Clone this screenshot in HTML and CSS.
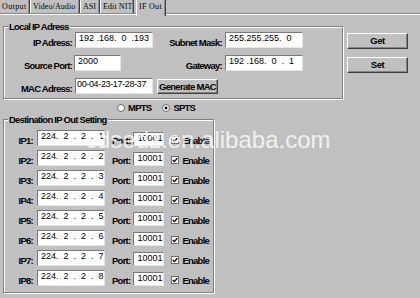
FILE: index.html
```html
<!DOCTYPE html>
<html>
<head>
<meta charset="utf-8">
<title>IP Out</title>
<link rel="stylesheet" href="styles.css">
</head>
<body>
<div class="app">
  <div class="tabs">
    <div class="tab w-output">Output</div>
    <div class="tab w-video">Video/Audio</div>
    <div class="tab w-asi">ASI</div>
    <div class="tab w-nit">Edit NIT</div>
    <div class="tab tab-active w-if">IF Out</div>
  </div>
  <div class="panel">
    <div class="top">
      <div class="group local">
        <span class="group-title">Local IP Adress</span>
        <div class="local-grid">
          <span class="lab">IP Adress:</span>
          <div class="field f-wide">192 .168.  0  .193</div>
          <span class="lab">Subnet Mask:</span>
          <div class="field f-wide">255.255.255.  0</div>

          <span class="lab">Source Port:</span>
          <div class="field f-port">2000</div>
          <span class="lab">Gateway:</span>
          <div class="field f-wide">192 .168.  0  .  1</div>

          <span class="lab">MAC Adress:</span>
          <div class="field f-wide f-mac">00-04-23-17-28-37</div>
          <div class="btn btn-gen">Generate MAC</div>
          <span></span>
        </div>
      </div>
      <div class="btns">
        <div class="btn btn-side">Get</div>
        <div class="btn btn-side">Set</div>
      </div>
    </div>

    <div class="radios">
      <svg class="radio" width="8" height="8" viewBox="0 0 8 8"><circle cx="4" cy="4" r="3.5" fill="#fff" stroke="#6a6a6a"/></svg>
      <span class="opt">MPTS</span>
      <svg class="radio radio-2" width="8" height="8" viewBox="0 0 8 8"><circle cx="4" cy="4" r="3.5" fill="#fff" stroke="#6a6a6a"/><circle cx="4" cy="4" r="1.4" fill="#000"/></svg>
      <span class="opt">SPTS</span>
    </div>

    <div class="group dest">
      <span class="group-title">Destination IP Out Setting</span>
      <div class="rows">
        <div class="row"><span class="ip-lab">IP1:</span><div class="field f-ip">224.  2  .  2  .  1</div><span class="port-lab">Port:</span><div class="field f-pt">10001</div><svg class="chk" width="8" height="8" viewBox="0 0 8 8"><rect x=".5" y=".5" width="7" height="7" fill="#fff" stroke="#707070"/><path d="M1.8 3.8 L3.3 5.6 L6.3 2.2" fill="none" stroke="#000" stroke-width="1.3"/></svg><span class="en">Enable</span></div>
        <div class="row"><span class="ip-lab">IP2:</span><div class="field f-ip">224.  2  .  2  .  2</div><span class="port-lab">Port:</span><div class="field f-pt">10001</div><svg class="chk" width="8" height="8" viewBox="0 0 8 8"><rect x=".5" y=".5" width="7" height="7" fill="#fff" stroke="#707070"/><path d="M1.8 3.8 L3.3 5.6 L6.3 2.2" fill="none" stroke="#000" stroke-width="1.3"/></svg><span class="en">Enable</span></div>
        <div class="row"><span class="ip-lab">IP3:</span><div class="field f-ip">224.  2  .  2  .  3</div><span class="port-lab">Port:</span><div class="field f-pt">10001</div><svg class="chk" width="8" height="8" viewBox="0 0 8 8"><rect x=".5" y=".5" width="7" height="7" fill="#fff" stroke="#707070"/><path d="M1.8 3.8 L3.3 5.6 L6.3 2.2" fill="none" stroke="#000" stroke-width="1.3"/></svg><span class="en">Enable</span></div>
        <div class="row"><span class="ip-lab">IP4:</span><div class="field f-ip">224.  2  .  2  .  4</div><span class="port-lab">Port:</span><div class="field f-pt">10001</div><svg class="chk" width="8" height="8" viewBox="0 0 8 8"><rect x=".5" y=".5" width="7" height="7" fill="#fff" stroke="#707070"/><path d="M1.8 3.8 L3.3 5.6 L6.3 2.2" fill="none" stroke="#000" stroke-width="1.3"/></svg><span class="en">Enable</span></div>
        <div class="row"><span class="ip-lab">IP5:</span><div class="field f-ip">224.  2  .  2  .  5</div><span class="port-lab">Port:</span><div class="field f-pt">10001</div><svg class="chk" width="8" height="8" viewBox="0 0 8 8"><rect x=".5" y=".5" width="7" height="7" fill="#fff" stroke="#707070"/><path d="M1.8 3.8 L3.3 5.6 L6.3 2.2" fill="none" stroke="#000" stroke-width="1.3"/></svg><span class="en">Enable</span></div>
        <div class="row"><span class="ip-lab">IP6:</span><div class="field f-ip">224.  2  .  2  .  6</div><span class="port-lab">Port:</span><div class="field f-pt">10001</div><svg class="chk" width="8" height="8" viewBox="0 0 8 8"><rect x=".5" y=".5" width="7" height="7" fill="#fff" stroke="#707070"/><path d="M1.8 3.8 L3.3 5.6 L6.3 2.2" fill="none" stroke="#000" stroke-width="1.3"/></svg><span class="en">Enable</span></div>
        <div class="row"><span class="ip-lab">IP7:</span><div class="field f-ip">224.  2  .  2  .  7</div><span class="port-lab">Port:</span><div class="field f-pt">10001</div><svg class="chk" width="8" height="8" viewBox="0 0 8 8"><rect x=".5" y=".5" width="7" height="7" fill="#fff" stroke="#707070"/><path d="M1.8 3.8 L3.3 5.6 L6.3 2.2" fill="none" stroke="#000" stroke-width="1.3"/></svg><span class="en">Enable</span></div>
        <div class="row"><span class="ip-lab">IP8:</span><div class="field f-ip">224.  2  .  2  .  8</div><span class="port-lab">Port:</span><div class="field f-pt">10001</div><svg class="chk" width="8" height="8" viewBox="0 0 8 8"><rect x=".5" y=".5" width="7" height="7" fill="#fff" stroke="#707070"/><path d="M1.8 3.8 L3.3 5.6 L6.3 2.2" fill="none" stroke="#000" stroke-width="1.3"/></svg><span class="en">Enable</span></div>
      </div>
    </div>
  </div>
  <div class="watermark">cdsedz.en.alibaba.com</div>
</div>
</body>
</html>
```

FILE: styles.css
```css
* { box-sizing: border-box; }
html, body { margin: 0; padding: 0; }
body {
  width: 420px;
  height: 298px;
  overflow: hidden;
  background: #c0c0c0;
  font-family: "Liberation Sans", Arial, sans-serif;
  color: #000;
}
.app {
  position: relative;
  width: 420px;
  height: 298px;
  background: #c0c0c0;
  overflow: hidden;
}

/* tabs */
.tabs {
  display: flex;
  align-items: flex-start;
  height: 14px;
  border-bottom: 1px solid #8a8a8a;
  box-shadow: 0 1px 0 #ffffff;
}
.tab {
  height: 13px;
  padding-left: 2px;
  border-left: 1px solid #ffffff;
  border-right: 1px solid #404040;
  box-shadow: inset -1px 0 0 #909090;
  font-family: "Liberation Serif", "Times New Roman", serif;
  font-size: 8px;
  letter-spacing: 0.1px;
  line-height: 13px;
  white-space: nowrap;
  overflow: hidden;
  background: #c0c0c0;
}
.w-output { width: 30px; border-left-color: #c0c0c0; padding-left: 1px; letter-spacing: 0.4px; }
.w-video { width: 50px; }
.w-asi { width: 20px; padding-left: 2px; letter-spacing: 0; }
.w-nit { width: 34px; }
.w-if { width: 30px; margin-left: 2px; padding-left: 2px; letter-spacing: 0.3px; }
.tab-active { height: 16px; }

/* panel */
.panel { padding-left: 3px; }
.top { display: flex; align-items: flex-start; }

.group {
  position: relative;
  border: 1px solid #808080;
  box-shadow: inset 1px 1px 0 #ffffff, 1px 1px 0 #ffffff;
}
.group-title {
  position: absolute;
  top: -6px;
  left: 4px;
  padding: 0 1px;
  background: #c0c0c0;
  font-size: 9.5px;
  font-weight: bold;
  letter-spacing: -0.75px;
  line-height: 12px;
  white-space: nowrap;
}

.local {
  width: 340px;
  height: 73px;
  margin-top: 12px;
}
.local-grid {
  display: grid;
  grid-template-columns: 70px 80px 70px 80px;
  grid-auto-rows: 16px;
  row-gap: 7px;
  align-items: end;
  padding-top: 5px;
}

.lab, .ip-lab, .port-lab, .opt, .en, .btn {
  font-size: 9.5px;
  font-weight: bold;
  letter-spacing: -0.75px;
  line-height: 10px;
  white-space: nowrap;
}
.lab { text-align: right; padding-right: 2px; }

.field {
  height: 16px;
  background: #ffffff;
  border: 1px solid;
  border-color: #7a7a7a #e6e6e6 #e6e6e6 #7a7a7a;
  font-size: 9px;
  line-height: 10px;
  padding: 0 0 0 3px;
  white-space: pre;
  overflow: hidden;
}
.f-wide { width: 78px; margin-left: 1px; }
.f-mac { padding-left: 1px; letter-spacing: -0.35px; }
.f-port { width: 47px; }

.btn {
  display: flex;
  align-items: center;
  justify-content: center;
  height: 16px;
  background: #c0c0c0;
  border: 1px solid;
  border-color: #ffffff #404040 #404040 #ffffff;
  box-shadow: inset -1px -1px 0 #858585;
  letter-spacing: -0.5px;
}
.btn-gen { width: 61px; margin-left: 3px; height: 15px; letter-spacing: -0.7px; }

.btns {
  display: flex;
  flex-direction: column;
  gap: 8px;
  margin-left: 4px;
  margin-top: 19px;
}
.btn-side { width: 61px; }

/* radios */
.radios {
  display: flex;
  align-items: center;
  height: 12px;
  margin-top: 3px;
  padding-left: 114px;
}
.radio { display: block; margin-right: 3px; }
.radio-2 { margin-left: 11px; }

/* destination group */
.dest {
  width: 211px;
  height: 174px;
  margin-top: 5px;
}
.rows {
  display: flex;
  flex-direction: column;
  gap: 4px;
  padding-top: 10px;
}
.row {
  display: flex;
  align-items: flex-end;
  height: 16px;
}
.ip-lab { width: 31px; text-align: right; padding-right: 2px; }
.f-ip { width: 68px; margin-left: 2px; }
.port-lab { margin-left: 7px; }
.f-pt { width: 31px; height: 14px; margin-left: 3px; }
.chk { display: block; margin-left: 7px; margin-bottom: 2px; }
.en { margin-left: 3px; }

/* watermark */
.watermark {
  position: absolute;
  left: 85px;
  top: 128px;
  font-size: 24px;
  line-height: 24px;
  color: rgba(255, 255, 255, 0.78);
  white-space: nowrap;
  pointer-events: none;
}
```
